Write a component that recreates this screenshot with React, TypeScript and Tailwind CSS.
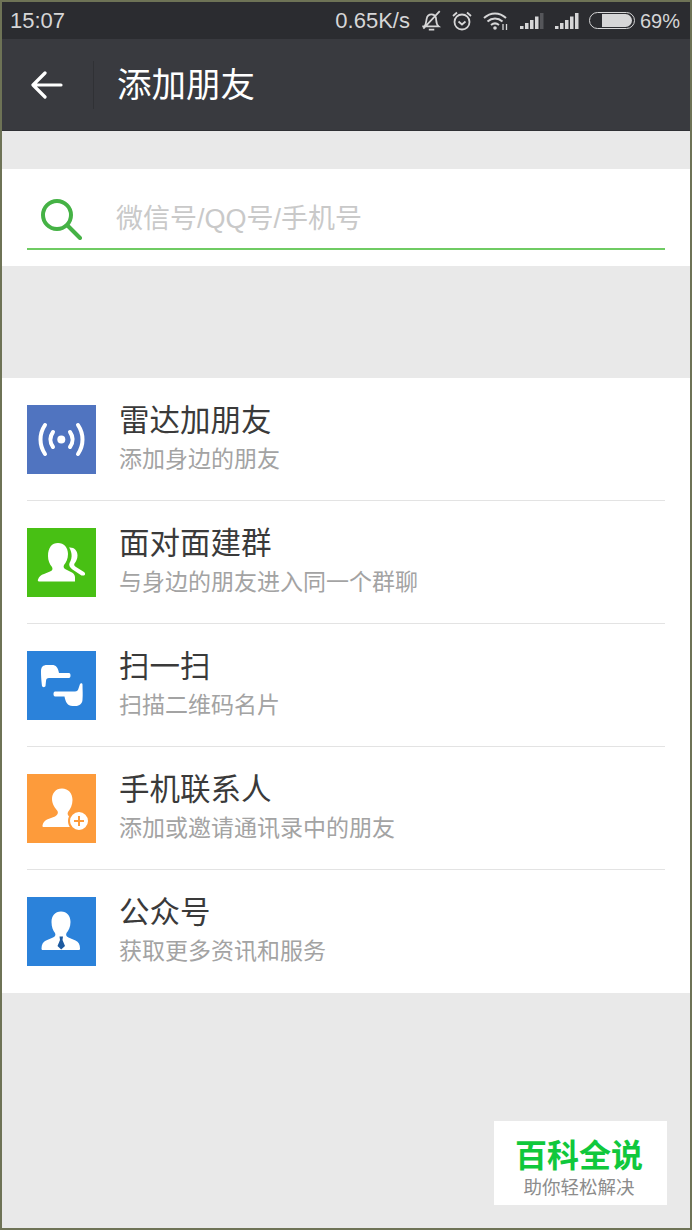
const FONT = "font-['Liberation_Sans','Noto_Sans_CJK_SC',sans-serif]"

function RadarIcon() {
  return (
    <svg viewBox="0 0 69 69" className="w-full h-full" fill="none" stroke="white" strokeLinecap="round">
      <circle cx="34.300" cy="34.500" r="4" fill="white" stroke="none" />
      <path d="M26 27c-3.500 5-3.500 10 0 15M43 27c3.500 5 3.500 10 0 15" strokeWidth="4" />
      <path d="M18 20c-6 9-6 20 0 29M51 20c6 9 6 20 0 29" strokeWidth="4" />
    </svg>
  )
}

function GroupIcon() {
  return (
    <svg viewBox="0 0 69 69" className="w-full h-full" fill="white">
      <path d="M31 15c6 0 10 4.500 10 11 0 5-2 8.500-4 11-1 2 0 3.500 2 4.500l6 3c2 1 3 3 3 5v4H12c-1 0-1.500-1-1-2 1-3 3-4.500 6-5.500l6-2.500c2.500-1 3-2.500 2-4.500-2.500-3-4-6.500-4-11C21 19.500 25 15 31 15z" />
      <path d="M43 19.500c4.500 0 7.500 3.500 7.500 8 0 3.500-1.500 6-3 8-.8 1.500 0 2.500 1.500 3.500l8 5c1.500 1 1.500 3.500-.5 3.500h-2l-9-6c-2.500-1.800-4-4-3-6.500 1.500-2.500 2.500-6 2-9-.3-2.500-1.200-5-2.500-6.500z" />
    </svg>
  )
}

function ScanIcon() {
  return (
    <svg viewBox="0 0 69 69" className="w-full h-full" fill="white">
      <path d="M14 20c0-4 2-6 6-6h5c4 0 6 2.500 7 8h10c2 0 2 5 0 5H22c-2 0-3 1-3 3l-.5 5c-.5 1.500-3 1.500-3.500 0-.5-5-1-8-1-15z" />
      <path d="M53 33c.5-1 2.500-1 2.500.5 0 5 .5 10 0 15 0 4-3 6.500-7 6.500h-3c-5 0-7-4-8-9.500h-9.500c-2 0-2-5 0-5h20c2 0 3-1 3.500-3z" />
    </svg>
  )
}

function ContactIcon() {
  return (
    <svg viewBox="0 0 69 69" className="w-full h-full">
      <path
        fill="white"
        d="M35 14.500c6.500 0 10.500 5 10.500 11.500 0 5-2 9-4.500 12-1 2 0 4 2.500 5.500l7 3c3 1.500 4 4 4.500 5.500 0 1-.5 1-1.500 1H17c-1 0-1.800-.5-1.500-1.500.5-2.500 1.500-4.500 4.500-6l8-3c2.500-1.500 3.500-3.500 2.500-5.500-2.500-3-5.500-7-5.500-12C25 19.500 28.500 14.500 35 14.500z"
      />
      <circle cx="52" cy="47" r="10" fill="white" stroke="#fd9b3b" strokeWidth="2" />
      <path d="M52 42v10M47 47h10" stroke="#fd9b3b" strokeWidth="2" />
    </svg>
  )
}

function OfficialIcon() {
  return (
    <svg viewBox="0 0 69 69" className="w-full h-full">
      <path
        fill="white"
        d="M34 14.500c6 0 9.500 4.500 9.500 10.500 0 5-2 8.500-4 11-1 2 0 3.500 2 4.500l7 3c3 1.500 4.500 4 4.500 8 0 1-.5 1.500-1.500 1.500H16c-1 0-1.500-.5-1.500-1.500 0-4 1.500-6.500 4.500-8l7-3c2-1 3-2.500 2-4.500-2-2.500-3.500-6-3.500-11C24.500 19 28 14.500 34 14.500z"
      />
      <path fill="#1d5aa0" d="M32.500 39.500h3.500l-.5 3.500 2.500 6-3.800 3.500-3.700-3.500 2.500-6z" />
    </svg>
  )
}

function SignalIcon({ dimLast, className }: { dimLast?: boolean; className?: string }) {
  return (
    <svg viewBox="0 0 24 16" className={className} fill="#d6d6d7">
      <rect x="0" y="13" width="3.500" height="3" />
      <rect x="5" y="10" width="3.500" height="6" />
      <rect x="10" y="7" width="3.500" height="9" />
      <rect x="15" y="3.500" width="3.500" height="12.500" />
      <rect x="20" y="0" width="3.500" height="16" fill={dimLast ? "#55565a" : "#d6d6d7"} />
    </svg>
  )
}

const rows = [
  { title: "雷达加朋友", sub: "添加身边的朋友", color: "bg-[#5074c0]", icon: <RadarIcon /> },
  { title: "面对面建群", sub: "与身边的朋友进入同一个群聊", color: "bg-[#48c014]", icon: <GroupIcon /> },
  { title: "扫一扫", sub: "扫描二维码名片", color: "bg-[#2b82da]", icon: <ScanIcon /> },
  { title: "手机联系人", sub: "添加或邀请通讯录中的朋友", color: "bg-[#fd9b3b]", icon: <ContactIcon /> },
  { title: "公众号", sub: "获取更多资讯和服务", color: "bg-[#2b82da]", icon: <OfficialIcon /> },
]

function StatusBar() {
  return (
    <div className="h-[37px] bg-[#2b2c30] flex items-center justify-between pl-[8px] pr-[10px] text-[#d6d6d7] text-[22px]">
      <span>15:07</span>
      <div className="flex items-center">
        <span>0.65K/s</span>
        {/* bell muted */}
        <svg viewBox="0 0 22 22" className="w-[24px] h-[24px] ml-[9px]" fill="none" stroke="#d6d6d7" strokeWidth="1.600">
          <path d="M5 16c1.500-2 1.500-4 2-7 .5-2.500 2-4 4.500-4 2 0 3.500 1 4 3 .5 3 0 6 2.500 8H3M9 19h5M19 2L4 18" />
        </svg>
        {/* alarm */}
        <svg viewBox="0 0 22 22" className="w-[22px] h-[22px] ml-[8px]" fill="none" stroke="#d6d6d7" strokeWidth="1.800">
          <circle cx="11" cy="12" r="7.500" />
          <path d="M7.500 11.500l3.500 3 3.500-3M2 6l4-3.500M20 6l-4-3.500" />
        </svg>
        {/* wifi */}
        <svg viewBox="0 0 26 20" className="w-[26px] h-[20px] ml-[10px]" fill="none" stroke="#d6d6d7" strokeWidth="2">
          <path d="M1 7c6.500-6 15.500-6 22 0M4.500 10.500c4.500-4 10.500-4 15 0M8 14c2.500-2 5.500-2 8 0" />
          <circle cx="12" cy="17" r="1.800" fill="#d6d6d7" stroke="none" />
          <path d="M20 13v6M23.500 13v6" strokeWidth="1.300" />
        </svg>
        <SignalIcon dimLast className="w-[24px] h-[16px] ml-[11px]" />
        <SignalIcon className="w-[24px] h-[16px] ml-[11px]" />
        {/* battery */}
        <div className="w-[46px] h-[17px] ml-[10px] rounded-full border border-[#d6d6d7] flex justify-end items-center pr-[2px]">
          <div className="w-[30px] h-[13px] rounded-r-full rounded-l-[3px] bg-[#d6d6d7]" />
        </div>
        <span className="ml-[5px] text-[20px]">69%</span>
      </div>
    </div>
  )
}

export default function App() {
  return (
    <div className={`relative w-[692px] h-[1230px] border-2 border-[#6e7356] bg-[#e9e9e9] ${FONT}`}>
      <StatusBar />

      {/* Top bar */}
      <div className="h-[92px] bg-[#393a3f] border-b border-[#2f3034] flex items-center">
        <svg viewBox="0 0 32 30" className="w-[32px] h-[30px] ml-[29px]" fill="none" stroke="white" strokeWidth="3.200" strokeLinecap="round" strokeLinejoin="round">
          <path d="M30 15H3M14 3L2 15l12 12" />
        </svg>
        <div className="w-px h-[48px] bg-[#303135] ml-[30px]" />
        <span className="ml-[23px] mt-[1px] text-white text-[34.500px] leading-none">添加朋友</span>
      </div>

      {/* Search */}
      <div className="mt-[38px] h-[97px] bg-white px-[25px]">
        <div className="h-[81px] border-b-2 border-[#6fcb63] flex items-center">
          <svg viewBox="0 0 42 42" className="w-[42px] h-[42px] ml-[13px] mt-[21px] shrink-0" fill="none" stroke="#45b245" strokeWidth="4" strokeLinecap="round">
            <circle cx="17" cy="17" r="14" />
            <path d="M27.500 27.500L40 40" />
          </svg>
          <span className="ml-[34px] mt-[22px] text-[27px] leading-none text-[#c9c9c9]">微信号/QQ号/手机号</span>
        </div>
      </div>

      {/* Entries */}
      <div className="mt-[112px] bg-white px-[25px]">
        {rows.map((row, i) => (
          <div key={row.title} className={`h-[123px] flex items-center ${i < rows.length - 1 ? "border-b border-[#e3e3e3]" : ""}`}>
            <div className={`w-[69px] h-[69px] shrink-0 ${row.color}`}>{row.icon}</div>
            <div className="ml-[24px] pb-[4px]">
              <div className="-ml-[1px] text-[30.500px] leading-[36px] text-[#3a3a3a]">{row.title}</div>
              <div className="-ml-[1px] mt-[7px] text-[23px] leading-[28px] text-[#a3a3a3]">{row.sub}</div>
            </div>
          </div>
        ))}
      </div>

      {/* Watermark */}
      <div className="absolute right-[23px] bottom-[23px] w-[173px] h-[84px] bg-white flex flex-col items-center">
        <div className="mt-[15px] -ml-[3px] text-[32px] leading-[40px] font-semibold text-[#10c83c]">百科全说</div>
        <div className="-ml-[3px] text-[18.500px] leading-[24px] text-[#8c8c8c]">助你轻松解决</div>
      </div>
    </div>
  )
}
